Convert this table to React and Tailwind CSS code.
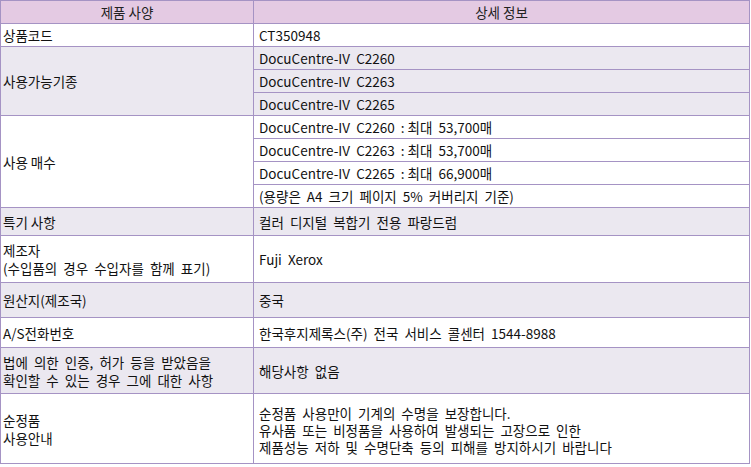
export default function App() {
  const font = { fontFamily: '"Noto Sans CJK KR", "Noto Sans", sans-serif' };
  const cellL = "border border-[#a593c4] px-[2px] text-left align-middle";
  const cellR = "border border-[#a593c4] pl-[5px] text-left align-middle";

  return (
    <div className="w-[751px] h-[467px] bg-white text-[13.5px] text-[#111] leading-[16px]" style={font}>
      <table className="w-[750px] border-collapse table-fixed">
        <colgroup>
          <col className="w-[253px]" />
          <col />
        </colgroup>
        <tbody>
          <tr className="h-[23px] bg-[#e4cae3]">
            <th className="border border-[#a593c4] font-normal text-center text-[#222]">제품 사양</th>
            <th className="border border-[#a593c4] font-normal text-center text-[#222]">상세 정보</th>
          </tr>

          <tr className="h-[23px] bg-white">
            <td className={cellL}>상품코드</td>
            <td className={cellR}>CT350948</td>
          </tr>

          {/* 사용가능기종 */}
          <tr className="h-[23px] bg-[#ebe8f0]">
            <td className={cellL} rowSpan={3}>사용가능기종</td>
            <td className={cellR}>DocuCentre-IV&nbsp; C2260</td>
          </tr>
          <tr className="h-[23px] bg-[#ebe8f0]">
            <td className={cellR}>DocuCentre-IV&nbsp; C2263</td>
          </tr>
          <tr className="h-[23px] bg-[#ebe8f0]">
            <td className={cellR}>DocuCentre-IV&nbsp; C2265</td>
          </tr>

          {/* 사용 매수 */}
          <tr className="h-[23px] bg-white">
            <td className={cellL} rowSpan={4}>사용 매수</td>
            <td className={cellR}>DocuCentre-IV&nbsp; C2260&nbsp; : 최대&nbsp; 53,700매</td>
          </tr>
          <tr className="h-[23px] bg-white">
            <td className={cellR}>DocuCentre-IV&nbsp; C2263&nbsp; : 최대&nbsp; 53,700매</td>
          </tr>
          <tr className="h-[23px] bg-white">
            <td className={cellR}>DocuCentre-IV&nbsp; C2265&nbsp; : 최대&nbsp; 66,900매</td>
          </tr>
          <tr className="h-[23px] bg-white">
            <td className={cellR}>(용량은&nbsp; A4&nbsp; 크기&nbsp; 페이지&nbsp; 5%&nbsp; 커버리지&nbsp; 기준)</td>
          </tr>

          <tr className="h-[28px] bg-[#ebe8f0]">
            <td className={cellL}>특기 사항</td>
            <td className={cellR}>컬러&nbsp; 디지털&nbsp; 복합기&nbsp; 전용&nbsp; 파랑드럼</td>
          </tr>

          <tr className="h-[47px] bg-white">
            <td className={`${cellL} leading-[18px]`}>
              제조자
              <br />
              (수입품의&nbsp; 경우&nbsp; 수입자를&nbsp; 함께&nbsp; 표기)
            </td>
            <td className={cellR}>Fuji&nbsp; Xerox</td>
          </tr>

          <tr className="h-[35px] bg-[#ebe8f0]">
            <td className={cellL}>원산지(제조국)</td>
            <td className={cellR}>중국</td>
          </tr>

          <tr className="h-[30px] bg-white">
            <td className={cellL}>A/S전화번호</td>
            <td className={cellR}>한국후지제록스(주)&nbsp; 전국&nbsp; 서비스&nbsp; 콜센터&nbsp; 1544-8988</td>
          </tr>

          <tr className="h-[46px] bg-[#ebe8f0]">
            <td className={`${cellL} leading-[18px]`}>
              법에&nbsp; 의한&nbsp; 인증,&nbsp; 허가&nbsp; 등을&nbsp; 받았음을
              <br />
              확인할&nbsp; 수&nbsp; 있는&nbsp; 경우&nbsp; 그에&nbsp; 대한&nbsp; 사항
            </td>
            <td className={cellR}>해당사항&nbsp; 없음</td>
          </tr>

          <tr className="h-[70px] bg-white">
            <td className={`${cellL} leading-[18px]`}>
              순정품
              <br />
              사용안내
            </td>
            <td className={`${cellR} leading-[17px] pt-[3px]`}>
              순정품&nbsp; 사용만이&nbsp; 기계의&nbsp; 수명을&nbsp; 보장합니다.
              <br />
              유사품&nbsp; 또는&nbsp; 비정품을&nbsp; 사용하여&nbsp; 발생되는&nbsp; 고장으로&nbsp; 인한
              <br />
              제품성능&nbsp; 저하&nbsp; 및&nbsp; 수명단축&nbsp; 등의&nbsp; 피해를&nbsp; 방지하시기&nbsp; 바랍니다
            </td>
          </tr>
        </tbody>
      </table>
    </div>
  );
}
